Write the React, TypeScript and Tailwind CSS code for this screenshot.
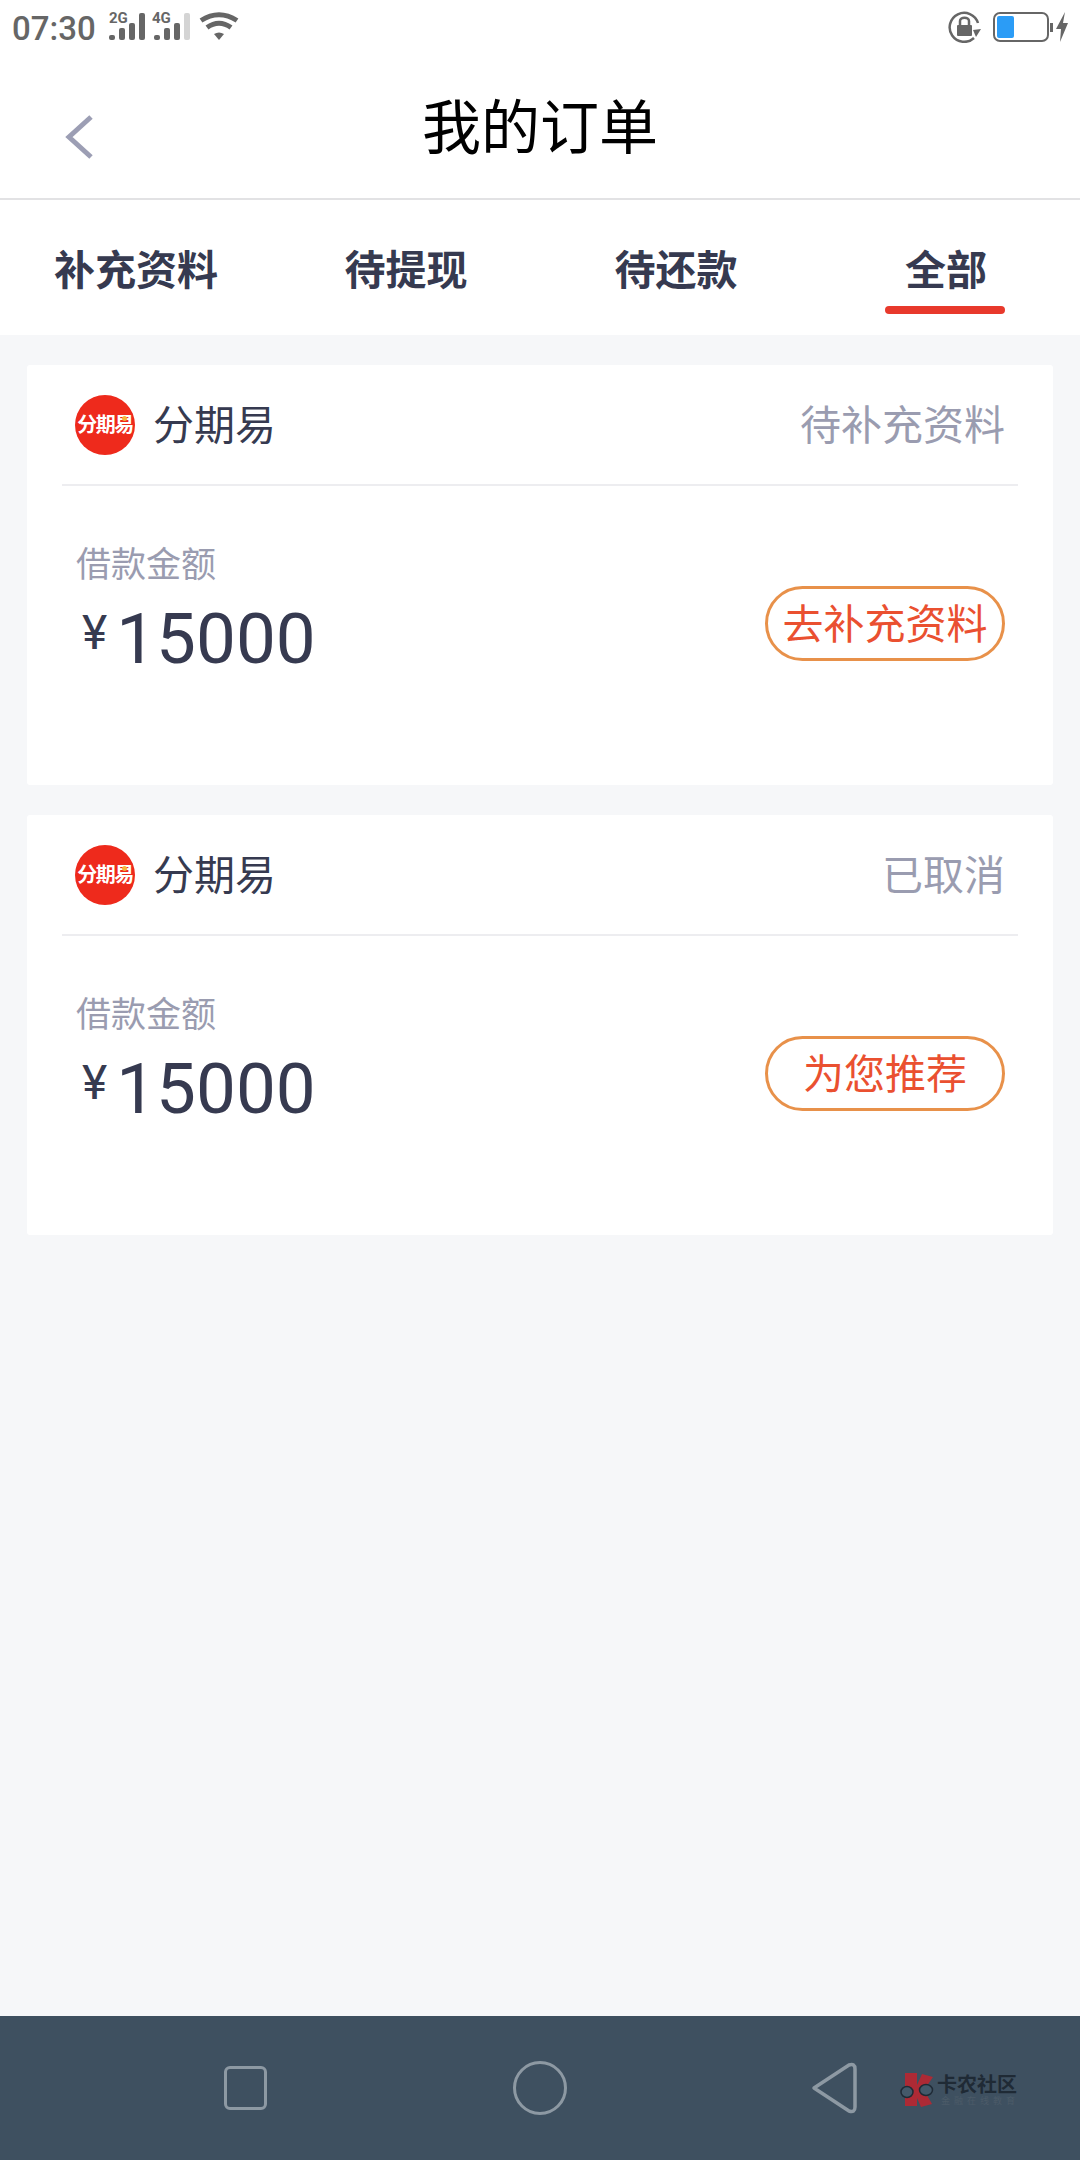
import React from "react";

const CJK = "font-['Roboto','Noto_Sans_CJK_SC',sans-serif]";

function SignalIcon({ label, dim, x }: { label: string; dim?: boolean; x: number }) {
  return (
    <svg width="38" height="31" viewBox="0 -4 38 31" className="block">
      <text x="0" y="10" fontSize="15" fontWeight="700" fontFamily="Roboto, sans-serif" fill="#666">
        {label}
      </text>
      <rect x={x} y="22" width="6" height="5" rx="2" fill="#666" />
      <rect x={x + 10} y="15" width="6" height="12" rx="2" fill="#666" />
      <rect x={x + 20} y="10" width="6" height="17" rx="2" fill="#666" />
      <rect x={x + 30} y="0" width="6" height="27" rx="2" fill={dim ? "#d4d4d4" : "#666"} />
    </svg>
  );
}

function StatusBar() {
  return (
    <div className="flex h-[52px] items-center justify-between bg-white pl-[12px] pr-[12px] pt-[4px]">
      <div className="flex items-center">
        <span className="font-['Roboto',sans-serif] text-[33px] font-medium leading-none text-[#666]">07:30</span>
        <div className="mb-[7px] ml-[13px]"><SignalIcon label="2G" x={0} /></div>
        <div className="mb-[7px] ml-[5px]"><SignalIcon label="4G" x={2} dim /></div>
        <svg width="40" height="28" viewBox="0 0 40 28" className="mb-[4px] ml-[9px]">
          <path d="M2 8.500Q20 -3 38 8.500" fill="none" stroke="#666" strokeWidth="5" />
          <path d="M8 15.500Q20 7 32 15.500" fill="none" stroke="#666" strokeWidth="5" />
          <path d="M15 22Q20 19 25 22L20 28Z" fill="#666" />
        </svg>
      </div>
      <div className="mb-[2px] flex items-center">
        <svg width="34" height="32" viewBox="0 0 34 32">
          <path d="M26 27A14.500 14.500 0 1 1 30 12" fill="none" stroke="#666" strokeWidth="2.500" />
          <path d="M25 19L33 18L28 26Z" fill="#666" />
          <rect x="9" y="14" width="15" height="11" rx="1" fill="#666" />
          <path d="M12 14V10C12 5.500 21 5.500 21 10V14" fill="none" stroke="#666" strokeWidth="2.500" />
        </svg>
        <div className="ml-[11px] flex h-[30px] w-[56px] rounded-[7px] border-[2.5px] border-[#666] p-[2px]">
          <div className="h-full w-[17px] rounded-[2px] bg-[#2b9cf6]" />
        </div>
        <div className="ml-[1px] h-[9px] w-[3px] bg-[#666]" />
        <svg width="12" height="30" viewBox="0 0 12 30" className="ml-[3px]">
          <path d="M9 0L0 17H5L4 30L12 11H7Z" fill="#666" />
        </svg>
      </div>
    </div>
  );
}

function Header() {
  return (
    <div className="relative flex h-[148px] items-center justify-center border-b-2 border-[#e2e2e4] bg-white">
      <svg width="30" height="46" viewBox="0 0 30 46" className="absolute left-[64px] top-[62px]">
        <path d="M27 3L5 23L27 43" fill="none" stroke="#9c9eb4" strokeWidth="5" />
      </svg>
      <h1 className="mt-[7px] text-[59px] font-normal leading-none text-black">我的订单</h1>
    </div>
  );
}

function Tabs() {
  const tabs = ["补充资料", "待提现", "待还款", "全部"];
  return (
    <div className="grid h-[135px] grid-cols-4 bg-white">
      {tabs.map((t, i) => (
        <div key={t} className="relative flex items-start justify-center pl-[2px] pt-[46px]">
          <span className="text-[41px] font-bold leading-[50px] text-[#363a50]">{t}</span>
          {i === 3 && <div className="absolute left-[75px] top-[106px] h-[8px] w-[120px] rounded-full bg-[#e8392c]" />}
        </div>
      ))}
    </div>
  );
}

function Logo() {
  return (
    <div className="relative flex h-[60px] w-[60px] items-center justify-center rounded-full bg-[#ee2a1c]">
      <span className="whitespace-nowrap text-[20px] font-bold leading-none tracking-[-1.5px] text-white">分期易</span>
      <div className="absolute left-[47px] top-[21px] h-[5px] w-[5px] rounded-full bg-[#f5b63c]" />
    </div>
  );
}

function OrderCard({ status, action }: { status: string; action: string }) {
  return (
    <div className="h-[420px] rounded-[3px] bg-white">
      <div className="mx-[35px] flex h-[121px] items-center justify-between border-b-2 border-[#ededf0]">
        <div className="flex items-center pl-[13px]">
          <Logo />
          <span className="ml-[18px] mt-[4px] text-[41px] leading-none text-[#363a50]">分期易</span>
        </div>
        <span className="mt-[4px] pr-[13px] text-[41px] leading-none text-[#9a9cb0]">{status}</span>
      </div>
      <div className="mt-[55px] flex items-start justify-between pl-[49px] pr-[48px]">
        <div>
          <div className="text-[35px] leading-[50px] text-[#9a9cb0]">借款金额</div>
          <div className="mt-[6px] flex items-center text-[#363a50]">
            <span className="mb-[12px] ml-[6px] font-['Roboto',sans-serif] text-[48px] leading-none">¥</span>
            <span className="ml-[9px] font-['Roboto',sans-serif] text-[71px] leading-[84px]">15000</span>
          </div>
        </div>
        <div className="mt-[45px] flex h-[75px] w-[240px] items-center justify-center rounded-full border-[3px] border-[#e8914a] pt-[3px]">
          <span className="text-[41px] leading-none text-[#ea5030]">{action}</span>
        </div>
      </div>
    </div>
  );
}

function NavBar() {
  return (
    <div className="relative flex h-[144px] items-center bg-[#3e5060]">
      <div className="ml-[224px] h-[44px] w-[43px] rounded-[6px] border-[3px] border-[#8d99a3]" />
      <div className="ml-[246px] h-[54px] w-[54px] rounded-full border-[3px] border-[#8d99a3]" />
      <svg width="46" height="52" viewBox="0 0 46 52" className="ml-[244px]">
        <path d="M3 26L38 3Q44 1 44 7V45Q44 51 38 49Z" fill="none" stroke="#8d99a3" strokeWidth="3.500" strokeLinejoin="round" />
      </svg>
      <div className="absolute left-[900px] top-[57px] flex items-center">
        <svg width="34" height="34" viewBox="0 0 34 34">
          <path d="M5 0H17V12L22 1L33 4L24 17L32 31L21 34L17 25V33H5Z" fill="#ad2a35" />
          <ellipse cx="7" cy="19" rx="6" ry="5.500" fill="#44596a" stroke="#1f2a35" strokeWidth="1.500" />
          <ellipse cx="26" cy="17" rx="6.500" ry="5.500" fill="#44596a" stroke="#1f2a35" strokeWidth="1.500" />
        </svg>
        <div className="ml-[3px] flex flex-col">
          <span className="text-[20px] font-bold leading-[22px] text-[#1f2a35]">卡农社区</span>
          <span className="pl-[4px] text-[9px] leading-[10px] tracking-[4px] text-[#4c5b68]">金融在线教育</span>
        </div>
      </div>
    </div>
  );
}

export default function App() {
  return (
    <div className={`flex h-[2160px] w-[1080px] flex-col bg-[#f6f7f9] ${CJK}`}>
      <StatusBar />
      <Header />
      <Tabs />
      <div className="flex flex-1 flex-col gap-[30px] px-[27px] pt-[30px]">
        <OrderCard status="待补充资料" action="去补充资料" />
        <OrderCard status="已取消" action="为您推荐" />
      </div>
      <NavBar />
    </div>
  );
}
